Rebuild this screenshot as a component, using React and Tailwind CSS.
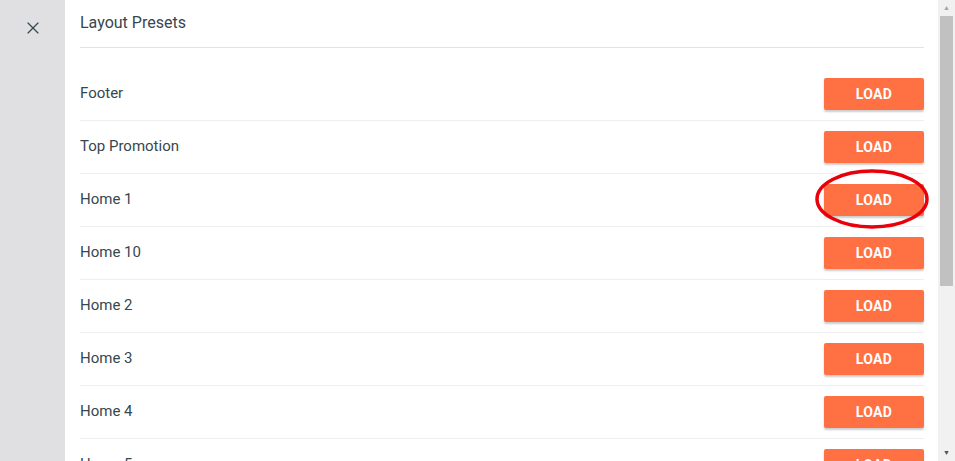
import { X } from 'lucide-react';

const presets = ['Footer', 'Top Promotion', 'Home 1', 'Home 10', 'Home 2', 'Home 3', 'Home 4', 'Home 5'];

export default function App() {
  return (
    <div className="h-[461px] w-[955px] flex overflow-hidden bg-white" style={{ fontFamily: 'Roboto, "Liberation Sans", sans-serif' }}>
      <div className="w-[65px] shrink-0 bg-[#e0e0e2] flex justify-center pt-[18px]">
        <X className="h-[20px] w-[20px] text-[#37474f]" strokeWidth={1.4} />
      </div>

      <div className="flex-1 pl-[15px] pr-[14px] relative overflow-hidden">
        <div className="h-[48px] border-b border-[#e3e3e3] flex items-center text-[16px] text-[#37474f] pb-[2px]">
          Layout Presets
        </div>
        <div className="pt-[20px]">
          {presets.map((name) => (
            <div key={name} className="h-[53px] border-b border-[#eeeeee] flex items-center justify-between">
              <span className="text-[15px] text-[#37474f] pb-[2px]">{name}</span>
              <button className="w-[100px] h-[32px] rounded-[2px] bg-[#ff7043] text-white text-[14px] font-bold tracking-[0.3px] shadow-[0_2px_2px_rgba(0,0,0,0.2)]">
                LOAD
              </button>
            </div>
          ))}
        </div>
        <svg className="absolute left-[745px] top-[166px] pointer-events-none" width="124" height="66" viewBox="0 0 124 66">
          <ellipse cx="62" cy="33" rx="55" ry="28" fill="none" stroke="#e8000b" strokeWidth="3.5" />
        </svg>
      </div>

      <div className="w-[17px] shrink-0 bg-[#f1f1f1] flex flex-col items-center">
        <div className="h-[16px] flex items-center justify-center text-[7px] text-[#a3a3a3]">▲</div>
        <div className="w-[13px] h-[270px] bg-[#c1c1c1]" />
        <div className="flex-1" />
        <div className="h-[16px] flex items-center justify-center text-[7px] text-[#505050]">▼</div>
      </div>
    </div>
  );
}
